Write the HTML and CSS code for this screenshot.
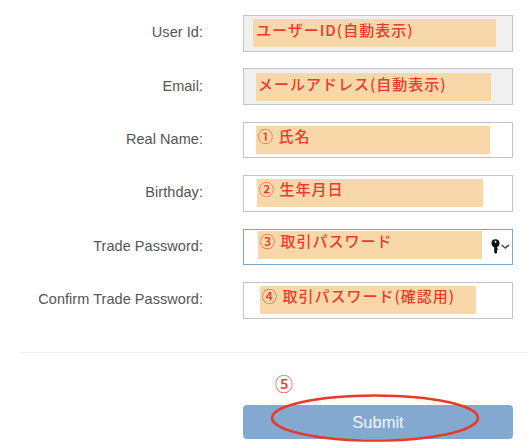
FILE: index.html
```html
<!DOCTYPE html>
<html lang="ja">
<head>
<meta charset="utf-8">
<title>Trade Password</title>
<link rel="stylesheet" href="styles.css">
</head>
<body>
<form class="form">
  <div class="row">
    <label class="label">User Id:</label>
    <div class="field field-off"><span class="note note-1">ユーザーID(自動表示)</span></div>
  </div>
  <div class="row">
    <label class="label">Email:</label>
    <div class="field field-off"><span class="note note-2">メールアドレス(自動表示)</span></div>
  </div>
  <div class="row">
    <label class="label">Real Name:</label>
    <div class="field"><span class="note note-3">① 氏名</span></div>
  </div>
  <div class="row">
    <label class="label">Birthday:</label>
    <div class="field"><span class="note note-4">② 生年月日</span></div>
  </div>
  <div class="row">
    <label class="label">Trade Password:</label>
    <div class="field field-focus"><span class="note note-5">③ 取引パスワード</span>
      <svg class="key" width="20" height="15" viewBox="0 0 20 15" aria-hidden="true">
        <circle cx="4.5" cy="4.2" r="4" fill="#111"/>
        <circle cx="4.5" cy="2.8" r="1" fill="#fff"/>
        <path d="M3.2 6h2.8v8l-1.3.8-1.5-1.2z M5.5 9.5h1.6v1.4h-1.6z" fill="#111"/>
        <path d="M10.5 6l3.7 3 3.8-3" fill="none" stroke="#555" stroke-width="1.6"/>
      </svg>
    </div>
  </div>
  <div class="row">
    <label class="label">Confirm Trade Password:</label>
    <div class="field"><span class="note note-6">④ 取引パスワード(確認用)</span></div>
  </div>
  <hr class="rule">
  <div class="actions">
    <button class="submit" type="button">Submit</button>
    <span class="step">⑤</span>
    <svg class="ring" width="212" height="52" viewBox="0 0 212 52" aria-hidden="true">
      <ellipse cx="106" cy="26" rx="103" ry="22.5" fill="none" stroke="#e8392b" stroke-width="2.6"/>
    </svg>
  </div>
</form>
</body>
</html>
```
FILE: styles.css
```css
html, body {
  margin: 0;
  background: #fff;
}
body {
  width: 530px;
  height: 448px;
  overflow: hidden;
  font-family: "Liberation Sans", Arial, sans-serif;
}
.form {
  display: flex;
  flex-direction: column;
  padding-top: 15px;
}
.row {
  display: grid;
  grid-template-columns: 203px 270px;
  column-gap: 40px;
  align-items: center;
  height: 36.6px;
  margin-bottom: 16.8px;
}
.label {
  text-align: right;
  font-size: 14.5px;
  letter-spacing: 0.05px;
  color: #555;
  padding-bottom: 2px;
}
.field {
  box-sizing: border-box;
  height: 36.6px;
  border: 1px solid #c4c4c4;
  display: flex;
  align-items: center;
  position: relative;
  background: #fff;
}
.field-off { background: #f0f0f0; }
.field-focus { border-color: #7ba7d2; }
.note {
  box-sizing: border-box;
  height: 28px;
  display: block;
  background: #f8d8a8;
  color: #ea3b2b;
  font-family: "Noto Sans CJK JP", "Noto Sans", sans-serif;
  font-size: 15px;
  font-weight: 500;
  line-height: 20px;
  letter-spacing: 1px;
  padding-left: 3px;
}
.note-1 { margin-left: 9px; width: 243px; padding-top: 1px; }
.note-2 { margin-left: 12px; width: 235px; padding-top: 1px; padding-left: 2px; }
.note-3 { margin-left: 12px; width: 234px; padding-left: 2px; }
.note-4 { margin-left: 13px; width: 226px; padding-left: 2px; }
.note-5 { margin-left: 14px; width: 224px; margin-top: -4px; padding-left: 2px; }
.note-6 { margin-left: 16px; width: 216px; padding-left: 2px; }
.key {
  position: absolute;
  right: 1px;
  top: 9px;
}
.rule {
  border: 0;
  height: 1px;
  background: #efefef;
  margin: 17px 2px 0 20px;
}
.actions {
  display: flex;
  margin: 52px 0 0 243px;
  position: relative;
}
.submit {
  width: 270px;
  height: 34px;
  border: 0;
  border-radius: 4px;
  background: #83a9d1;
  color: #f2f6fb;
  font: 16.5px "Liberation Sans", Arial, sans-serif;
}
.step {
  position: absolute;
  left: 32px;
  top: -35px;
  color: #ea3b2b;
  font: 500 18px "Noto Sans CJK JP", sans-serif;
}
.ring {
  position: absolute;
  left: 26px;
  top: -13px;
}
```
